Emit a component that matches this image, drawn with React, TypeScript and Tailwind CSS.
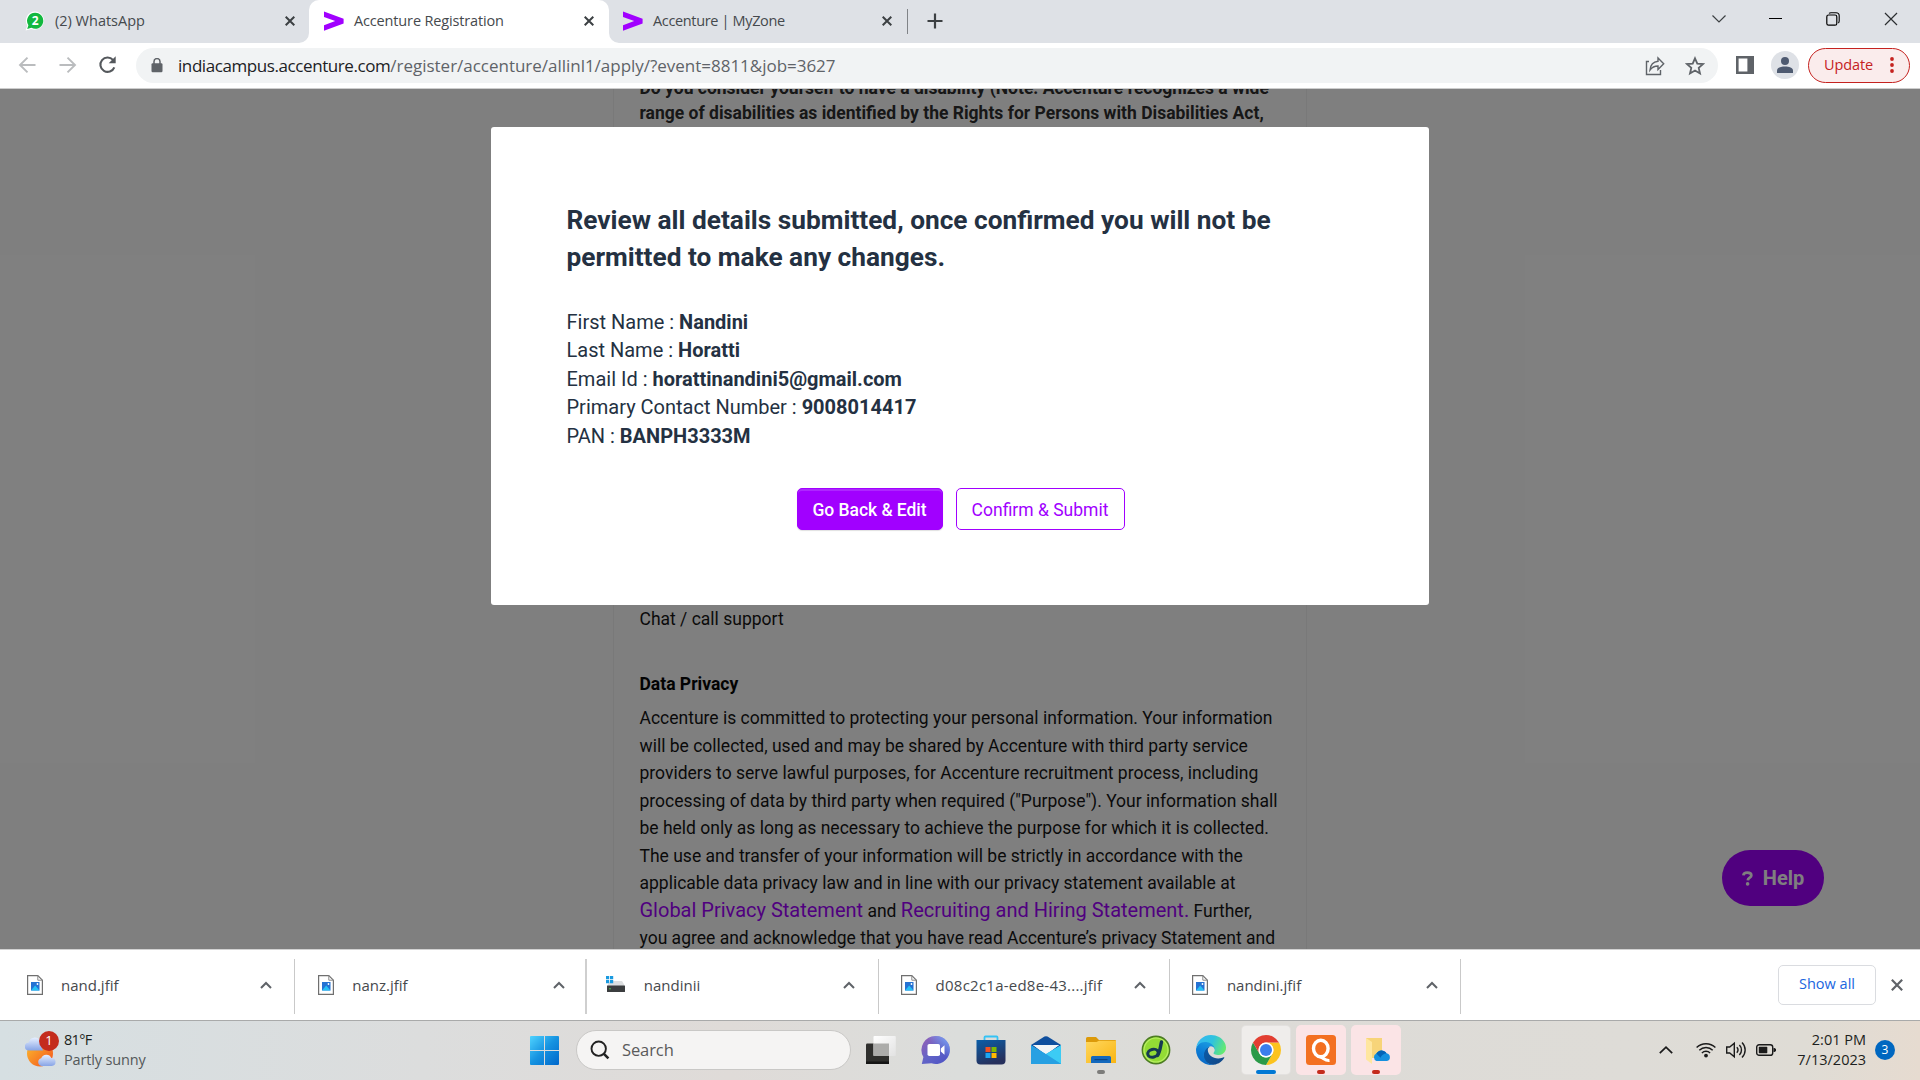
import React from "react";

const UI = "font-['Open_Sans','Noto_Sans',sans-serif]";

/* ---------- Browser glyphs ---------- */

const AccentureMark = () => (
  <svg width="20" height="20" viewBox="0 0 20 20" className="shrink-0">
    <path d="M0 .5 19.6 7.8v4.6L0 19.8v-5.6l11.2-4.1L0 6z" fill="#a100ff" />
  </svg>
);

const WhatsAppMark = () => (
  <svg width="20" height="20" viewBox="0 0 20 20" className="shrink-0">
    <path d="M10.2.6a9 9 0 1 1-3.8 17.3L.6 19.6l1.7-5.2A9 9 0 0 1 10.2.6z" fill="#fff" />
    <path d="M10.2 1.8a8 8 0 1 1-3.8 15L2.2 18l1.2-3.8a8 8 0 0 1 6.8-12.4z" fill="#12b83f" />
    <text x="10.2" y="14.4" textAnchor="middle" fontSize="12" fontWeight="700" fill="#fff" fontFamily="Open Sans">2</text>
  </svg>
);

const Cross = ({ size = 10, color = "#3c4043", width = 2 }: { size?: number; color?: string; width?: number }) => (
  <svg width={size} height={size} viewBox="0 0 10 10" className="shrink-0">
    <path d="M.7.7l8.6 8.6M9.3.7.7 9.3" stroke={color} strokeWidth={(width * 10) / size} fill="none" />
  </svg>
);

const CaretUp = ({ color = "#5f6368" }: { color?: string }) => (
  <svg width="12" height="8" viewBox="0 0 12 8" className="shrink-0">
    <path d="M1 7l5-5 5 5" stroke={color} strokeWidth="2" fill="none" />
  </svg>
);

function TabStrip() {
  return (
    <div className="flex h-[43px] shrink-0 bg-[#dee1e6] text-[14.5px] text-[#45494d]">
      <div className="flex w-[309px] items-center pb-px pl-[25px] pr-[14px]">
        <WhatsAppMark />
        <span className="ml-[10px] flex-1">(2) WhatsApp</span>
        <Cross />
      </div>
      <div className="relative flex w-[300px] items-center rounded-t-[10px] bg-white pb-px pl-[15px] pr-[15px]">
        <svg width="10" height="10" className="absolute -left-[10px] bottom-0">
          <path d="M10 0v10H0A10 10 0 0 0 10 0z" fill="#fff" />
        </svg>
        <svg width="10" height="10" className="absolute -right-[10px] bottom-0">
          <path d="M0 0v10h10A10 10 0 0 1 0 0z" fill="#fff" />
        </svg>
        <AccentureMark />
        <span className="ml-[10px] flex-1 tracking-[-0.15px]">Accenture Registration</span>
        <Cross />
      </div>
      <div className="flex w-[298px] items-center pb-px pl-[14px] pr-[15px]">
        <AccentureMark />
        <span className="ml-[10px] flex-1 tracking-[-0.35px]">Accenture | MyZone</span>
        <Cross />
      </div>
      <div className="mt-[9px] h-[25px] w-px bg-[#808387]" />
      <svg width="16" height="16" viewBox="0 0 16 16" className="ml-[19px] mt-[13px]">
        <path d="M8 .5v15M.5 8h15" stroke="#3c4043" strokeWidth="2.2" />
      </svg>
      <div className="ml-auto flex h-[37px] items-center pr-[22px]">
        <svg width="14" height="8" viewBox="0 0 14 8">
          <path d="M.5.5 7 7 13.5.5" stroke="#3c4043" strokeWidth="1.2" fill="none" />
        </svg>
        <div className="ml-[43px] h-px w-[13px] bg-black" />
        <svg width="14" height="14" viewBox="0 0 14 14" className="ml-[44px]">
          <rect x=".8" y="3" width="10" height="10.2" rx="1.8" fill="none" stroke="#000" strokeWidth="1.2" />
          <path d="M3 1.4C3.6.9 4 .8 5 .8h5c2 0 3.2 1.2 3.2 3v5c0 1-.2 1.600-.8 2.200" fill="none" stroke="#000" strokeWidth="1.1" />
        </svg>
        <div className="ml-[44px]">
          <Cross size={14} color="#2b2e31" width={1.2} />
        </div>
      </div>
    </div>
  );
}

function Toolbar() {
  return (
    <div className="flex h-[46px] shrink-0 items-center border-b border-[#cdcdcd] bg-white pr-[10px]">
      <svg width="18" height="18" viewBox="0 0 18 18" className="ml-[18px] -mt-px">
        <path d="M17.500 9H2.200M9.500 1.600 2 9l7.500 7.400" stroke="#babcbe" strokeWidth="1.900" fill="none" />
      </svg>
      <svg width="18" height="18" viewBox="0 0 18 18" className="ml-[23px] -mt-px">
        <path d="M.5 9h15.300M8.500 1.600 16 9l-7.500 7.400" stroke="#babcbe" strokeWidth="1.900" fill="none" />
      </svg>
      <svg width="20" height="20" viewBox="0 0 20 20" className="ml-[21px] -mt-px">
        <path d="M16.300 12.300A7.200 7.200 0 1 1 15 4.900" stroke="#54585c" strokeWidth="2.100" fill="none" />
        <path d="M17.700 1.200v7h-7z" fill="#54585c" />
      </svg>
      <div className="ml-[18px] flex h-[35px] w-[1582px] items-center rounded-full bg-[#f1f3f4] pl-[15px] pr-[13px]">
        <svg width="12" height="15" viewBox="0 0 12 15">
          <rect x=".5" y="5.200" width="11" height="9" rx="1.200" fill="#5f6368" />
          <path d="M3 6V3.600a3 3 0 0 1 6 0V6" stroke="#5f6368" strokeWidth="1.500" fill="none" />
        </svg>
        <span className="ml-[15px] whitespace-nowrap text-[17px] leading-[24px] text-[#5f6368]">
          <span className="tracking-[-0.42px] text-[#202124]">indiacampus.accenture.com</span>
          <span className="tracking-[-0.02px]">/register/accenture/allinl1/apply/?event=8811&amp;job=3627</span>
        </span>
        <svg width="20" height="20" viewBox="0 0 20 20" className="ml-auto">
          <path d="M4 5.500H1.500v13h14V14" stroke="#5f6368" strokeWidth="1.400" fill="none" />
          <path d="M13 2v3.300C8.300 5.800 5.500 9 5 14c2-2.800 4.500-4 8-4v3.500L18.700 7.700z" stroke="#5f6368" strokeWidth="1.400" fill="none" />
        </svg>
        <svg width="20" height="20" viewBox="0 0 20 20" className="ml-[20px]">
          <path d="M10 2.300l2.300 5.300 5.700.5-4.300 3.800 1.300 5.600-5-3-5 3 1.300-5.600L2 8.100l5.700-.5z" stroke="#5f6368" strokeWidth="1.800" fill="none" />
        </svg>
      </div>
      <svg width="18" height="18" viewBox="0 0 18 18" className="ml-[18px] -mt-px">
        <path d="M0 0h18v18H0zM2.600 2.600v12.800h8.800V2.600z" fill="#5f6368" fillRule="evenodd" />
      </svg>
      <div className="ml-[17px] -mt-px flex h-[28px] w-[28px] items-center justify-center rounded-full bg-[#dee1e6]">
        <svg width="16" height="16" viewBox="0 0 16 16">
          <circle cx="8" cy="4" r="4" fill="#4e5a70" />
          <path d="M0 16v-2.500C0 10.600 4 9.400 8 9.400s8 1.200 8 4.100V16z" fill="#4e5a70" />
        </svg>
      </div>
      <div className="ml-auto flex h-[35px] w-[102px] items-center rounded-full border-[1.500px] border-[#c5221f] bg-[#faecec] pb-px pl-[15px] pr-[15px] text-[14.500px] text-[#c5221f]">
        <span className="flex-1 tracking-[-0.100px]">Update</span>
        <svg width="4" height="16" viewBox="0 0 4 16">
          <circle cx="2" cy="2" r="1.900" fill="#c5221f" />
          <circle cx="2" cy="8" r="1.900" fill="#c5221f" />
          <circle cx="2" cy="14" r="1.900" fill="#c5221f" />
        </svg>
      </div>
    </div>
  );
}

/* ---------- Web page ---------- */

function PageForm() {
  return (
    <div className="mx-auto h-[1000px] w-[694px] border-x border-[#f2f2f2] pl-[25.5px] font-['Roboto',sans-serif] text-[17.5px] leading-[27.5px] text-[#151515]">
      <div className="-mt-[13px] h-[530px] font-bold leading-[25px] text-[#2f2f2f]">
        <div className="whitespace-nowrap">Do you consider yourself to have a disability (Note: Accenture recognizes a wide</div>
        <div className="whitespace-nowrap">range of disabilities as identified by the Rights for Persons with Disabilities Act,</div>
      </div>
      <div>Chat / call support</div>
      <div className="mt-[37px] font-bold text-[#060606]">Data Privacy</div>
      <div className="mt-[7px] whitespace-nowrap">
        <div>Accenture is committed to protecting your personal information. Your information</div>
        <div>will be collected, used and may be shared by Accenture with third party service</div>
        <div>providers to serve lawful purposes, for Accenture recruitment process, including</div>
        <div>processing of data by third party when required ("Purpose"). Your information shall</div>
        <div>be held only as long as necessary to achieve the purpose for which it is collected.</div>
        <div>The use and transfer of your information will be strictly in accordance with the</div>
        <div>applicable data privacy law and in line with our privacy statement available at</div>
        <div className="-mt-px h-[28.500px]">
          <a className="text-[20px] text-[#a100ff]">Global Privacy Statement</a> and{" "}
          <a className="text-[20px] text-[#a100ff]">Recruiting and Hiring Statement.</a> Further,
        </div>
        <div>you agree and acknowledge that you have read Accenture’s privacy Statement and</div>
      </div>
    </div>
  );
}

const details: [string, string][] = [
  ["First Name", "Nandini"],
  ["Last Name", "Horatti"],
  ["Email Id", "horattinandini5@gmail.com"],
  ["Primary Contact Number", "9008014417"],
  ["PAN", "BANPH3333M"],
];

function ReviewDialog() {
  return (
    <div className="mx-auto mt-[38px] h-[478px] w-[938px] rounded-[3px] bg-white pl-[75.5px] pr-[74.5px] pt-[75px] font-['Roboto',sans-serif] text-[#243142]">
      <h2 className="whitespace-nowrap text-[26.250px] font-bold leading-[37px]">
        Review all details submitted, once confirmed you will not be
        <br />
        permitted to make any changes.
      </h2>
      <div className="mt-[31.600px] text-[20px] leading-[28.500px]">
        {details.map(([label, value]) => (
          <div key={label}>
            {label} : <b>{value}</b>
          </div>
        ))}
      </div>
      <div className="mt-[37.900px] flex justify-center gap-[13px] text-[17.5px]">
        <button className="h-[42px] w-[146px] rounded-[5px] border border-[#a100ff] bg-[#a100ff] pt-[2px] font-medium tracking-[-0.04px] text-white shadow-[inset_0_2px_0_#ad26ff,0_1px_1px_#00000020]">
          Go Back &amp; Edit
        </button>
        <button className="h-[42px] w-[169px] rounded-[5px] border border-[#a100ff] bg-white pt-[2px] text-[#a100ff]">
          Confirm &amp; Submit
        </button>
      </div>
    </div>
  );
}

function WebPage() {
  return (
    <main className="relative h-[860px] shrink-0 overflow-hidden bg-white">
      <PageForm />
      <div className="absolute bottom-[43px] right-[96px] flex h-[56px] w-[102px] items-center justify-center gap-[10px] rounded-full bg-[#a100ff] font-['Roboto',sans-serif] text-[20px] font-bold text-white">
        <svg width="11" height="15" viewBox="0 0 11 15">
          <path d="M1.400 4.400C1.600 2.600 3.200 1.700 5.300 1.700c2.300 0 4 .9 4 2.800 0 2.300-3.400 2-3.500 4.900" stroke="#fff" strokeWidth="2.800" fill="none" />
          <circle cx="5.600" cy="12.900" r="1.800" fill="#fff" />
        </svg>
        <span>Help</span>
      </div>
      <div className="absolute inset-0 flex items-start bg-black/50">
        <ReviewDialog />
      </div>
    </main>
  );
}

/* ---------- Downloads shelf ---------- */

const ImageFile = () => (
  <svg width="16" height="20" viewBox="0 0 16 20" className="shrink-0">
    <path d="M.6.600h10.200l4.600 4.600v14.200H.600z" fill="#fff" stroke="#6f6f6f" strokeWidth="1.200" />
    <path d="M10.800.600v4.600h4.600" fill="none" stroke="#8a8a8a" />
    <rect x="4" y="7" width="8.500" height="8.500" fill="#2472d3" />
    <path d="M4 15.500 8.200 10.500l4.300 5z" fill="#27c0f5" />
    <circle cx="10.500" cy="9" r=".9" fill="#fff" />
  </svg>
);

const DriveFile = () => (
  <svg width="20" height="20" viewBox="0 0 20 20" className="shrink-0">
    <path d="M4 6h12l3 5H1z" fill="#dcdee0" />
    <rect x="1" y="10.500" width="18" height="6.500" rx=".6" fill="#3b3d3f" />
    <circle cx="4" cy="13.800" r=".8" fill="#4fd14f" />
    <path d="M0 1h3.200v3.200H0zM4 1h3.200v3.200H4zM0 5h3.200v3.200H0zM4 5h3.200v3.200H4z" fill="#1a9ae0" />
  </svg>
);

const downloads = [
  { name: "nand.jfif" },
  { name: "nanz.jfif", heavy: true },
  { name: "nandinii", drive: true },
  { name: "d08c2c1a-ed8e-43....jfif", wide: true },
  { name: "nandini.jfif" },
];

function DownloadShelf() {
  return (
    <div className="flex h-[71px] shrink-0 items-center border-t border-[#d2d2d2] bg-white pl-[4px] text-[15px] text-[#46494d]">
      {downloads.map((d) => (
        <div
          key={d.name}
          className={
            "mt-[2px] flex h-[55px] items-center " +
            (d.drive ? "pl-[19px] " : "pl-[22.500px] ") +
            (d.heavy ? "w-[292px] border-r-2 border-[#cfcfcf] pr-[20.500px]" : "w-[291.300px] border-r border-[#c9c9c9] pr-[22.500px]")
          }
        >
          <div className="-mt-[3px]">{d.drive ? <DriveFile /> : <ImageFile />}</div>
          <span className={"-mt-[2px] flex-1 whitespace-nowrap " + (d.drive ? "ml-[17.500px]" : "ml-[18.500px]") + (d.wide ? " tracking-[0.240px]" : "")}>{d.name}</span>
          <div className="-mt-[2px] flex"><CaretUp /></div>
        </div>
      ))}
      <div className="ml-auto flex items-center pr-[17px]">
        <div className="flex h-[40px] w-[98px] items-center justify-center rounded-[5px] border border-[#dadce0] pb-[2px] text-[14.500px] text-[#1a66e0]">Show all</div>
        <div className="-mt-px ml-[15px]">
          <Cross size={12} color="#5f6368" width={2.200} />
        </div>
      </div>
    </div>
  );
}

/* ---------- Taskbar ---------- */

const Weather = () => (
  <div className="relative ml-[25px] h-[36px] w-[34px]">
    <svg width="34" height="36" viewBox="0 0 34 36">
      <defs>
        <linearGradient id="sun" x1="0" y1="0" x2="1" y2="1">
          <stop offset="0" stopColor="#fbc02d" />
          <stop offset="1" stopColor="#f4511e" />
        </linearGradient>
        <linearGradient id="cloud" x1="0" y1="0" x2="0" y2="1">
          <stop offset="0" stopColor="#e6efff" />
          <stop offset="1" stopColor="#87a4e6" />
        </linearGradient>
      </defs>
      <circle cx="15" cy="21.500" r="13" fill="url(#sun)" />
      <path d="M4 18.500a4 4 0 0 1-.3-8A6 6 0 0 1 15 9l3 9.500z" fill="url(#cloud)" />
      <path d="M16.500 34a4 4 0 0 1-.3-7.800A5.500 5.500 0 0 1 26.400 26a4 4 0 0 1 .3 8z" fill="url(#cloud)" />
    </svg>
    <div className="absolute -top-px left-[14px] flex h-[20px] w-[20px] items-center justify-center rounded-full bg-[#c42b1c] text-[13px] text-white">1</div>
  </div>
);

const StartIcon = () => (
  <svg width="29" height="29" viewBox="0 0 29 29">
    <defs>
      <linearGradient id="win" x1="0" y1="0" x2="1" y2="1">
        <stop offset="0" stopColor="#4fd3ff" />
        <stop offset=".5" stopColor="#1592e0" />
        <stop offset="1" stopColor="#0067cb" />
      </linearGradient>
    </defs>
    <path d="M1 0h13v14H0V1a1 1 0 0 1 1-1zM15 0h13a1 1 0 0 1 1 1v13H15zM0 15h14v14H1a1 1 0 0 1-1-1zM15 15h14v13a1 1 0 0 1-1 1H15z" fill="url(#win)" />
  </svg>
);

const TaskViewIcon = () => (
  <svg width="30" height="30" viewBox="0 0 30 30">
    <defs>
      <linearGradient id="tvw" x1="0" y1="0" x2="1" y2="1">
        <stop offset="0" stopColor="#fff" />
        <stop offset="1" stopColor="#e2e2e2" />
      </linearGradient>
    </defs>
    <rect x="0" y="8.500" width="23" height="20.500" rx="1.200" fill="#2f2f2d" />
    <rect x="0" y="26.500" width="23" height="2.500" fill="#151515" />
    <rect x="7.500" y="1" width="22.300" height="20" rx="1" fill="url(#tvw)" />
    <path d="M7.500 8.500H23V21H7.500z" fill="#acacaa" />
  </svg>
);

const ChatIcon = () => (
  <svg width="30" height="30" viewBox="0 0 30 30">
    <defs>
      <linearGradient id="chat" x1="0" y1="0" x2="1" y2="1">
        <stop offset="0" stopColor="#9b5fb5" />
        <stop offset=".5" stopColor="#6264c7" />
        <stop offset="1" stopColor="#4a50c4" />
      </linearGradient>
      <linearGradient id="chatHi" x1="0" y1="1" x2="1" y2="0">
        <stop offset=".55" stopColor="#7fa4f5" stopOpacity="0" />
        <stop offset="1" stopColor="#7fb0ff" />
      </linearGradient>
    </defs>
    <path d="M15 1a14 14 0 1 1-4.500 27.300L.800 29l1.600-7A14 14 0 0 1 15 1z" fill="url(#chat)" />
    <path d="M15 1a14 14 0 1 1-4.500 27.300L.800 29l1.600-7A14 14 0 0 1 15 1z" fill="url(#chatHi)" />
    <rect x="6.500" y="9" width="12.500" height="12" rx="1.800" fill="#fff" />
    <path d="M19.800 13.500 23.500 10.300v9.500l-3.700-3.200z" fill="#fff" />
  </svg>
);

const StoreIcon = () => (
  <svg width="30" height="30" viewBox="0 0 30 30">
    <defs>
      <linearGradient id="store" x1="0" y1="0" x2=".4" y2="1">
        <stop offset="0" stopColor="#0a5ea8" />
        <stop offset="1" stopColor="#26305c" />
      </linearGradient>
    </defs>
    <path d="M8.500 6V2.500a1 1 0 0 1 1-1h11a1 1 0 0 1 1 1V6" stroke="#35c3f5" strokeWidth="1.800" fill="none" />
    <path d="M.500 5h29v20.500a4 4 0 0 1-4 4h-21a4 4 0 0 1-4-4z" fill="url(#store)" />
    <path d="M9.500 12h5v5h-5z" fill="#f25022" />
    <path d="M15.500 12h5v5h-5z" fill="#7fba00" />
    <path d="M9.500 18h5v5h-5z" fill="#1ba6f2" />
    <path d="M15.500 18h5v5h-5z" fill="#ffb900" />
  </svg>
);

const MailIcon = () => (
  <svg width="30" height="30" viewBox="0 0 30 30">
    <path d="M0 10 13.500 1.600a3 3 0 0 1 3 0L30 10l-5 9H5z" fill="#0f4f9e" />
    <path d="M2 10h26L15 20z" fill="#f3f5f7" />
    <path d="M0 10.200 15 19 30 10.200V29H0z" fill="#2aa3e4" />
    <path d="M30 10.200V29L15 19z" fill="#3ccbf4" />
    <path d="M2 10h26L15 18.500z" fill="#f3f5f7" />
    <path d="M0 29V10.200L30 29z" fill="#27a0e2" />
  </svg>
);

const FolderIcon = () => (
  <svg width="30" height="30" viewBox="0 0 30 30">
    <defs>
      <linearGradient id="folder" x1="0" y1="0" x2="1" y2="1">
        <stop offset="0" stopColor="#ffd75e" />
        <stop offset="1" stopColor="#f9b512" />
      </linearGradient>
    </defs>
    <path d="M0 3.500A1.500 1.500 0 0 1 1.500 2H10l3 3h16a1 1 0 0 1 1 1v6H0z" fill="#dc9a0a" />
    <path d="M0 7h10.500L13 5.800h17V28H0z" fill="url(#folder)" />
    <path d="M5 28v-5.500A1.500 1.500 0 0 1 6.500 21h17a1.500 1.500 0 0 1 1.500 1.500V28z" fill="#1469bd" />
    <path d="M8.500 24.600h13" stroke="#0b4586" strokeWidth="1.200" />
  </svg>
);

const GreenDIcon = () => (
  <svg width="30" height="30" viewBox="0 0 30 30">
    <circle cx="15" cy="15" r="13.600" fill="#93dc35" stroke="#4c7d22" strokeWidth="1.600" />
    <circle cx="15" cy="15" r="12" fill="none" stroke="#b7ee62" strokeWidth="1.200" />
    <ellipse cx="12" cy="18.200" rx="5.300" ry="3.900" fill="none" stroke="#163a52" strokeWidth="3" transform="rotate(-15 12 18.200)" />
    <path d="M20.500 7c-1.200 4.500-1.200 9.500-4 13.500" fill="none" stroke="#163a52" strokeWidth="3.400" strokeLinecap="round" />
  </svg>
);

const EdgeIcon = () => (
  <svg width="30" height="30" viewBox="0 0 256 256">
    <defs>
      <linearGradient id="edgeA" x1=".3" y1="0" x2="1" y2=".6">
        <stop offset="0" stopColor="#0c59a4" />
        <stop offset="1" stopColor="#114a8b" />
      </linearGradient>
      <linearGradient id="edgeB" x1=".6" y1="0" x2=".3" y2="1">
        <stop offset="0" stopColor="#1b9de2" />
        <stop offset=".5" stopColor="#0c7cd5" />
        <stop offset="1" stopColor="#0a68c4" />
      </linearGradient>
      <linearGradient id="edgeC" x1="0" y1=".3" x2="1" y2=".6">
        <stop offset="0" stopColor="#35b8f1" />
        <stop offset=".5" stopColor="#2fc2df" />
        <stop offset="1" stopColor="#66eb6e" />
      </linearGradient>
    </defs>
    <path fill="url(#edgeA)" d="M235.680 190.080a93.730 93.730 0 0 1-10.540 4.710 101.870 101.870 0 0 1-35.900 6.460c-47.320 0-88.540-32.550-88.540-74.320A31.480 31.480 0 0 1 117.130 99.600c-42.800 1.800-53.800 46.400-53.800 72.530 0 73.880 68.090 81.370 82.760 81.370 7.910 0 19.840-2.300 27-4.560l1.310-.44a128.340 128.340 0 0 0 66.600-52.800 4 4 0 0 0-5.320-5.620Z" />
    <path fill="url(#edgeB)" d="M105.730 241.420a79.200 79.200 0 0 1-22.740-21.340 80.720 80.720 0 0 1 29.530-120c3.120-1.470 8.450-4.130 15.540-4a32.350 32.350 0 0 1 25.690 13 31.880 31.880 0 0 1 6.360 18.660c0-.21 24.460-79.600-80-79.600-43.900 0-80 41.660-80 78.210a130.150 130.150 0 0 0 12.110 56 128 128 0 0 0 156.380 67.110 75.550 75.550 0 0 1-62.780-8Z" />
    <path fill="url(#edgeC)" d="M152.330 148.860c-.81 1.050-3.300 2.500-3.300 5.660 0 2.610 1.700 5.120 4.720 7.230 14.380 10 41.490 8.680 41.560 8.680a59.560 59.560 0 0 0 30.270-8.350A61.380 61.380 0 0 0 256 109.190c.26-22.410-8-37.310-11.340-43.910C223.460 23.840 177.720 0 128 0A128 128 0 0 0 0 126.200c.48-36.540 36.800-66.050 80-66.050 3.500 0 23.460.34 42 10.070 16.340 8.580 24.900 18.940 30.850 29.210 6.180 10.670 7.280 24.150 7.280 29.520s-2.740 13.330-7.800 19.910Z" />
  </svg>
);

const ChromeIcon = () => (
  <svg width="30" height="30" viewBox="0 0 48 48">
    <path d="M24 48A24 24 0 0 0 44.780 12H24a12 12 0 0 1 10.390 18z" fill="#fcc31e" />
    <path d="M34.390 30a12 12 0 0 1-20.780 0L3.220 12A24 24 0 0 0 24 48z" fill="#2b9a48" />
    <path d="M13.610 30A12 12 0 0 1 24 12h20.780A24 24 0 0 0 3.220 12z" fill="#e23e31" />
    <circle cx="24" cy="24" r="12" fill="#fff" />
    <circle cx="24" cy="24" r="9.600" fill="#3b7ded" />
  </svg>
);

const QIcon = () => (
  <svg width="30" height="30" viewBox="0 0 30 30">
    <rect width="30" height="30" rx="3.500" fill="#f37021" />
    <ellipse cx="14.800" cy="13.500" rx="7.300" ry="8.300" fill="none" stroke="#fff" strokeWidth="3.400" />
    <path d="M13 21.500c4 .5 5.500 4.500 10.500 4" fill="none" stroke="#fff" strokeWidth="3" />
  </svg>
);

const CloudFolderIcon = () => (
  <svg width="30" height="30" viewBox="0 0 30 30">
    <path d="M5 3h16v20H5z" fill="#f7d479" />
    <path d="M5 3l6 4v22l-6-4.500z" fill="#ffe6a0" />
    <path d="M15.500 26a4 4 0 0 1-.2-7.400 6 6 0 0 1 10.200-.4A4 4 0 0 1 26 26z" fill="#1490df" />
    <path d="M15.300 18.600a6 6 0 0 1 10.200-.4c-3 .3-5 2-6 4.500z" fill="#0364b8" />
  </svg>
);

function TaskCell({ children, tile = "", mark = "" }: { children: React.ReactNode; tile?: string; mark?: string }) {
  return (
    <div className="flex h-full w-[55px] items-center justify-center">
      <div className={"relative flex items-center justify-center " + (tile || "h-[48px] w-[48px]")}>
        {children}
        {mark && <div className={"absolute h-[4px] rounded-full " + mark} />}
      </div>
    </div>
  );
}

function Taskbar() {
  return (
    <div className="flex h-[60px] shrink-0 items-center border-t border-[#a9aaaa] bg-[linear-gradient(90deg,#d6dfe2_0%,#dcdddd_22%,#dfdbd8_38%,#dbdddb_50%,#dddbd7_65%,#dedcd7_85%,#dfdcd5_94%,#e6dbd0_100%)] pb-px text-[14.500px]">
      <div className="flex w-[517px] items-center">
        <Weather />
        <div className="-mt-px ml-[5px] leading-[20px]">
          <div className="tracking-[-0.700px] text-[#1d1f20]">81°F</div>
          <div className="tracking-[-0.150px] text-[#54585a]">Partly sunny</div>
        </div>
      </div>
      <TaskCell>
        <StartIcon />
      </TaskCell>
      <div className="ml-[4px] flex h-[40px] w-[274.500px] items-center rounded-full border border-[#c9c8c6] bg-[#f5f4f3] pl-[13px]">
        <svg width="20" height="20" viewBox="0 0 20 20">
          <circle cx="8.700" cy="8.700" r="7.200" fill="none" stroke="#222" strokeWidth="1.900" />
          <path d="M13.400 13.400l5 5" stroke="#222" strokeWidth="2.600" />
        </svg>
        <span className="ml-[12px] mt-px text-[16.500px] tracking-[-0.1px] text-[#5b5b5b]">Search</span>
      </div>
      <div className="ml-[2.500px] flex h-full">
        <TaskCell>
          <TaskViewIcon />
        </TaskCell>
        <TaskCell>
          <ChatIcon />
        </TaskCell>
        <TaskCell>
          <StoreIcon />
        </TaskCell>
        <TaskCell>
          <MailIcon />
        </TaskCell>
        <TaskCell mark="bottom-0 w-[8px] bg-[#7c7c7a]">
          <FolderIcon />
        </TaskCell>
        <TaskCell>
          <GreenDIcon />
        </TaskCell>
        <TaskCell>
          <EdgeIcon />
        </TaskCell>
        <TaskCell tile="h-[48px] w-[48px] rounded-[4px] bg-[#efedeb] shadow-[0_0_0_1px_#e3e1df]" mark="bottom-0 w-[20px] bg-[#0078d4]">
          <ChromeIcon />
        </TaskCell>
        <TaskCell tile="h-[50px] w-[50px] rounded-[5px] bg-[#fbe4e6]" mark="bottom-px w-[8px] bg-[#c42b1c]">
          <QIcon />
        </TaskCell>
        <TaskCell tile="h-[50px] w-[50px] rounded-[5px] bg-[#fbe4e6]" mark="bottom-px w-[8px] bg-[#c42b1c]">
          <CloudFolderIcon />
        </TaskCell>
      </div>
      <div className="ml-auto flex items-center pr-[25px]">
        <svg width="14" height="8" viewBox="0 0 14 8">
          <path d="M.8 7.200 7 1.200l6.200 6" stroke="#1b1b1b" strokeWidth="1.700" fill="none" />
        </svg>
        <svg width="20" height="16" viewBox="0 0 20 16" className="ml-[23px]">
          <g fill="none" stroke="#1b1b1b" strokeWidth="1.400">
            <path d="M.6 5.600a13.300 13.300 0 0 1 18.800 0" />
            <path d="M3.300 8.300a9.500 9.500 0 0 1 13.400 0" />
            <path d="M5.900 11a5.800 5.800 0 0 1 8.200 0" />
          </g>
          <circle cx="10" cy="13.600" r="1.900" fill="#1b1b1b" />
        </svg>
        <svg width="20" height="18" viewBox="0 0 20 18" className="ml-[10px]">
          <g fill="none" stroke="#1b1b1b" strokeWidth="1.400">
            <path d="M.7 6h3L8.300 2.200v13.600L3.700 12h-3z" />
            <path d="M10.800 6.300a4 4 0 0 1 0 5.400M13.400 3.900a7.300 7.300 0 0 1 0 10.200M16 1.500a10.500 10.500 0 0 1 0 15" />
          </g>
        </svg>
        <svg width="20" height="12" viewBox="0 0 20 12" className="ml-[10px]">
          <rect x=".7" y=".7" width="16" height="10.600" rx="2.400" fill="none" stroke="#1b1b1b" strokeWidth="1.400" />
          <rect x="2.800" y="2.800" width="8.500" height="6.400" rx=".6" fill="#1b1b1b" />
          <path d="M17.500 4h1l1.500 1v2l-1.500 1h-1z" fill="#1b1b1b" />
        </svg>
        <div className="-mt-px w-[90px] text-right leading-[20px] text-[#1d1f20]">
          <div>2:01 PM</div>
          <div>7/13/2023</div>
        </div>
        <div className="ml-[9px] flex h-[20px] w-[20px] items-center justify-center rounded-full bg-[#0067c0] text-[12px] text-white">3</div>
      </div>
    </div>
  );
}

export default function App() {
  return (
    <div className={"flex h-[1080px] w-[1920px] flex-col overflow-hidden bg-white " + UI}>
      <TabStrip />
      <Toolbar />
      <WebPage />
      <DownloadShelf />
      <Taskbar />
    </div>
  );
}
